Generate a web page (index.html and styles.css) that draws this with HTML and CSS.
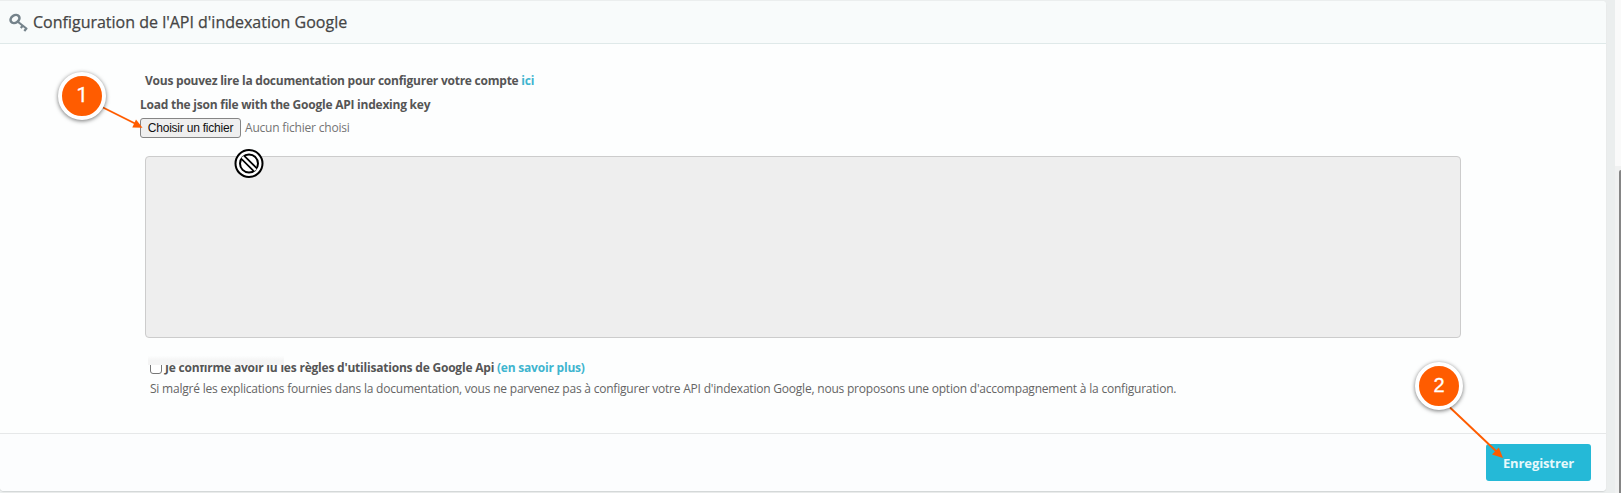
FILE: index.html
```html
<!DOCTYPE html>
<html lang="fr">
<head>
<meta charset="utf-8">
<title>Configuration de l'API d'indexation Google</title>
<link rel="stylesheet" href="styles.css">
</head>
<body>
<div class="page">
  <main class="panel">
    <header class="panel-header">
      <svg class="key" width="20" height="20" viewBox="0 0 20 20" fill="none" stroke="#75838b" stroke-width="2.6">
        <ellipse cx="6" cy="6" rx="4.7" ry="3.700" transform="rotate(-35 6 6)"/>
        <path d="M8.500 8.500 18 16M11.800 15l2.500-3M15.300 18l2.500-3" stroke-width="2.2"/>
      </svg>
      <h1 class="title">Configuration de l'API d'indexation Google</h1>
    </header>
    <section class="panel-body">
      <p class="doc">Vous pouvez lire la documentation pour configurer votre compte <a class="link">ici</a></p>
      <p class="load">Load the json file with the Google API indexing key</p>
      <div class="file"><button class="choose">Choisir un fichier</button><span class="none">Aucun fichier choisi</span></div>
      <div class="textarea"></div>
      <div class="confirm"><span class="checkbox"></span><span class="rules">Je confirme avoir lu les règles d'utilisations de Google Api <a class="link">(en savoir plus)</a></span></div>
      <p class="help">Si malgré les explications fournies dans la documentation, vous ne parvenez pas à configurer votre API d'indexation Google, nous proposons une option d'accompagnement à la configuration.</p>
    </section>
    <footer class="panel-footer"><button class="save">Enregistrer</button></footer>
  </main>
  <div class="scroll-track"><div class="scroll-thumb"></div></div>
  <div class="smudge"></div>
  <svg class="overlay" width="1621" height="493" viewBox="0 0 1621 493">
    <g fill="#ff5c00" stroke="#ff5c00" stroke-width="1.9">
      <path d="M103 107.500 136 124"/><path d="M142.500 127.700 132.300 127.500 136 119.500Z" stroke="none"/>
      <path d="M1450 407.500 1497 452"/><path d="M1503 458 1492 454.500 1498.800 447.500Z" stroke="none"/>
    </g>
    <g fill="none">
      <circle cx="249" cy="163.500" r="13.500" fill="#fff" stroke="#000" stroke-width="2"/>
      <circle cx="249" cy="163.500" r="9" stroke="#000" stroke-width="2"/>
      <path d="M243 157.500 255 169.500" stroke="#000" stroke-width="6"/>
      <path d="M242.300 156.800 255.700 170.200" stroke="#fff" stroke-width="2.400"/>
    </g>
  </svg>
  <div class="badge badge-one">1</div>
  <div class="badge badge-two">2</div>
</div>
</body>
</html>
```
FILE: styles.css
```css
* { box-sizing: border-box; }
body { margin: 0; font-family: "Open Sans", sans-serif; font-size: 12px; color: #555; }
h1, p { margin: 0; }
button { margin: 0; }
.page { position: relative; display: flex; width: 1621px; height: 493px; padding-top: 1px; overflow: hidden; background: #ebeeee; }
.panel { display: flex; flex-direction: column; width: 1606px; height: 490px; background: #fdfefe; border-radius: 0 4px 4px 4px; box-shadow: 0 1px 1px #d2d5d5; }
.panel-header { display: flex; align-items: center; gap: 4px; height: 43px; padding-left: 9px; background: #f8fbfb; border-bottom: 1px solid #dfe9e9; border-radius: 0 4px 0 0; }
.key { flex: none; margin-top: 1px; }
.title { font-size: 16px; font-weight: 400; line-height: 22px; color: #454545; -webkit-text-stroke: .25px #454545; white-space: nowrap; }
.panel-body { display: flex; flex-direction: column; align-items: flex-start; height: 389px; padding: 28px 0 0 140px; white-space: nowrap; }
.doc, .load, .rules { font-weight: 700; line-height: 18px; letter-spacing: -.235px; }
.rules { letter-spacing: -.21px; }
.doc { margin-left: 5px; }
.load { margin-top: 6px; }
.link { color: #3fb5cf; }
.file { display: flex; align-items: center; gap: 4px; height: 20px; margin-top: 4px; }
.choose { width: 101px; height: 20px; padding: 0; border: 1px solid #858585; border-radius: 3px; background: #efefef; color: #111; font: 12px "Liberation Sans", sans-serif; letter-spacing: -.22px; }
.none { margin-top: -2px; color: #747474; letter-spacing: -.2px; }
.textarea { width: 1316px; height: 182px; margin: 18px 0 0 5px; border: 1px solid #ccc; border-radius: 4px; background: #eee; }
.confirm { display: flex; align-items: center; gap: 3px; height: 18px; margin: 21px 0 0 10px; }
.checkbox { width: 12px; height: 12px; border: 1px solid #777; border-radius: 3px; background: #fff; }
.help { margin: 3px 0 0 10px; line-height: 18px; color: #656565; letter-spacing: -.213px; }
.panel-footer { display: flex; justify-content: flex-end; height: 58px; padding: 10px 15px 0 0; background: #fcfdfe; border-top: 1px solid #e6e8e9; border-radius: 0 0 4px 4px; }
.save { width: 105px; height: 37px; padding: 0; border: 0; border-radius: 3px; background: #25b9d7; color: #e6f8fb; font: 700 13px "Open Sans", sans-serif; letter-spacing: -.1px; }
.scroll-track { width: 6px; height: 493px; margin: -1px 0 0 9px; padding: 170px 0 0 4px; background: linear-gradient(#fafafa 0 166px, #f0f1f1 166px); }
.scroll-thumb { width: 2px; height: 323px; background: #858585; border-radius: 2px 0 0 0; }
.smudge { position: absolute; left: 148px; top: 356px; width: 136px; height: 9px; background: linear-gradient(transparent, #f2f2f2 60%); box-shadow: inset 0 -5px #f4f4f4; filter: blur(.7px); }
.overlay { position: absolute; left: 0; top: 0; }
.badge { position: absolute; display: flex; align-items: center; justify-content: center; width: 48px; height: 48px; padding-bottom: 2px; border: 4px solid #fff; border-radius: 50%; background: #ff5c00; box-shadow: 0 1px 4px rgba(0,0,0,.55); color: #fff; font: 20px "Liberation Sans", sans-serif; -webkit-text-stroke: .3px #fff; }
.badge-one { left: 58px; top: 72px; font-family: Roboto, sans-serif; }
.badge-two { left: 1415px; top: 362px; }
```
